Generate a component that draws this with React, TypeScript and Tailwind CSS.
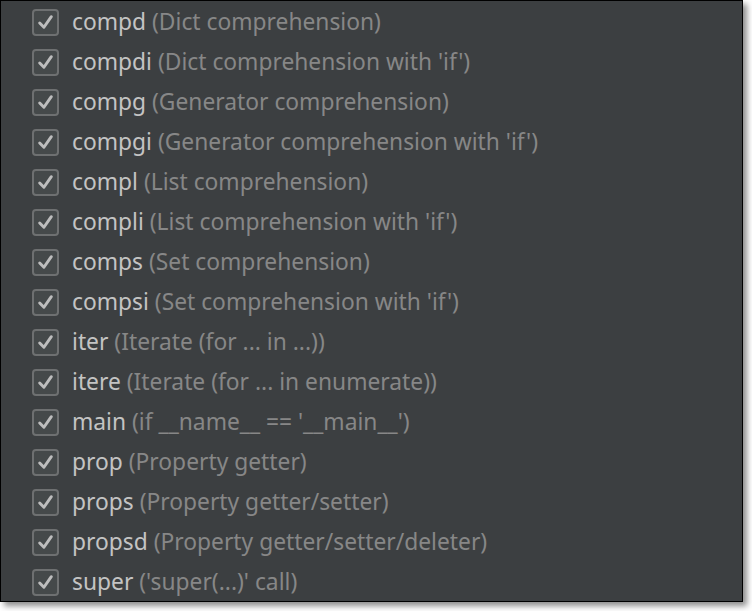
import React from 'react';

type Template = { key: string; desc: string };

const templates: Template[] = [
  { key: 'compd', desc: '(Dict comprehension)' },
  { key: 'compdi', desc: "(Dict comprehension with 'if')" },
  { key: 'compg', desc: '(Generator comprehension)' },
  { key: 'compgi', desc: "(Generator comprehension with 'if')" },
  { key: 'compl', desc: '(List comprehension)' },
  { key: 'compli', desc: "(List comprehension with 'if')" },
  { key: 'comps', desc: '(Set comprehension)' },
  { key: 'compsi', desc: "(Set comprehension with 'if')" },
  { key: 'iter', desc: '(Iterate (for ... in ...))' },
  { key: 'itere', desc: '(Iterate (for ... in enumerate))' },
  { key: 'main', desc: "(if __name__ == '__main__')" },
  { key: 'prop', desc: '(Property getter)' },
  { key: 'props', desc: '(Property getter/setter)' },
  { key: 'propsd', desc: '(Property getter/setter/deleter)' },
  { key: 'super', desc: "('super(...)' call)" },
];

function CheckBox() {
  return (
    <div className="w-[27px] h-[27px] rounded-[4px] border-2 border-[#6e7071] bg-[#45494a] flex items-center justify-center shrink-0">
      <svg width="19" height="19" viewBox="0 0 18 18" fill="none">
        <path d="M3.5 9.5 L7.5 13.5 L14.5 3.5" stroke="#bdbdbd" strokeWidth="2.8" strokeLinecap="round" strokeLinejoin="round" />
      </svg>
    </div>
  );
}

export default function App() {
  return (
    <div className="w-[752px] h-[611px] bg-white">
      <div className="w-[743px] h-[602px] bg-[#3c3f41] border border-black shadow-[4px_4px_6px_rgba(0,0,0,0.45)] pt-px pl-[31px] font-['Noto_Sans',sans-serif] text-[22.8px]">
        {templates.map((t) => (
          <div key={t.key} className="h-10 flex items-center gap-[13px]">
            <CheckBox />
            <div className="leading-none whitespace-nowrap">
              <span className="text-[#c4c4c4]">{t.key}</span>{' '}
              <span className="text-[#878787]">{t.desc}</span>
            </div>
          </div>
        ))}
      </div>
    </div>
  );
}
